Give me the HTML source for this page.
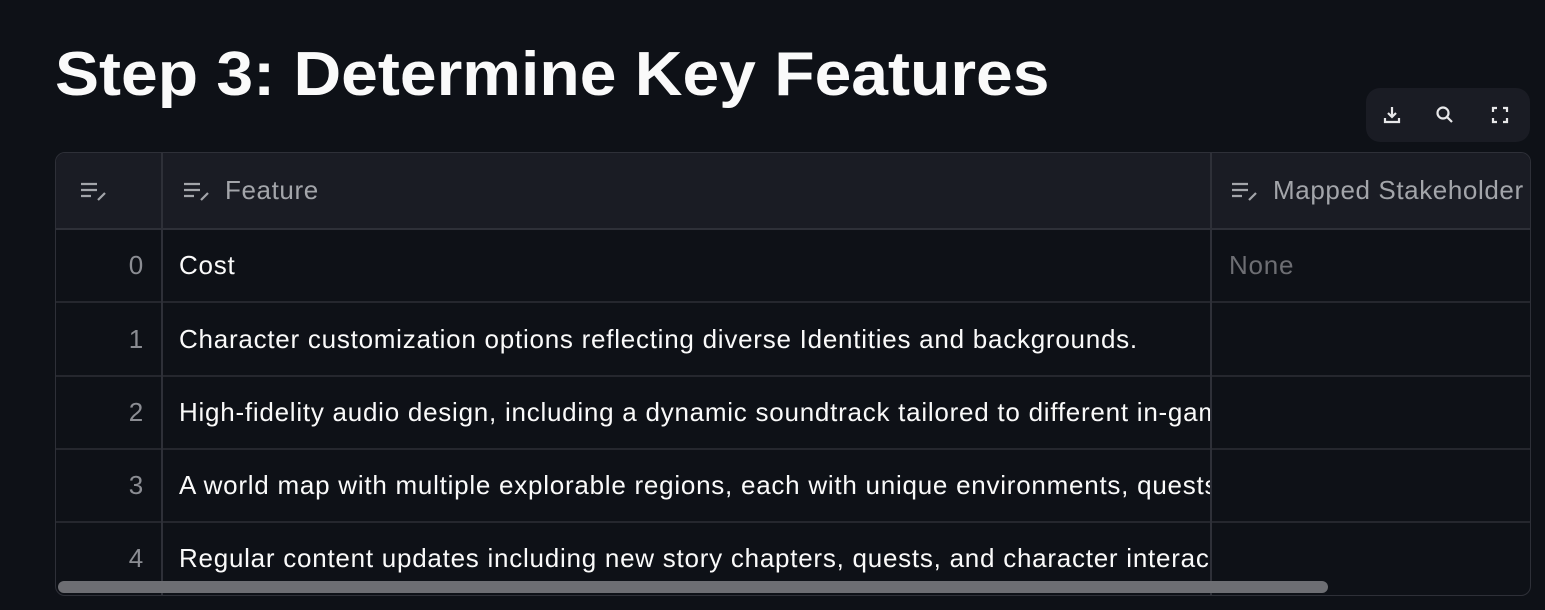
<!DOCTYPE html>
<html><head><style>
body{margin:0;width:1545px;height:610px;background:#0e1117;overflow:hidden;font-family:"Liberation Sans",sans-serif;color:#fafafa;position:relative}
h1{position:absolute;left:55px;top:30px;margin:0;font-size:62px;font-weight:bold;line-height:90px;white-space:nowrap;transform:scaleX(1.065);transform-origin:0 0}
.tb{position:absolute;left:1366px;top:88px;width:164px;height:54px;background:#1a1c24;border-radius:14px}
.tb svg{position:absolute;top:15px}
.tbl{position:absolute;left:55px;top:152px;width:1474px;height:442px;border:1px solid #2e3038;border-radius:10px;overflow:hidden}
.hdr{position:absolute;left:0;top:0;width:100%;height:75px;background:#1a1c24;border-bottom:2px solid #2e3038}
.vl{position:absolute;top:0;height:100%;width:2px;background:#2e3038}
.row{position:absolute;left:0;width:100%;height:72px;border-bottom:2px solid #25272e;font-size:26px;letter-spacing:0.75px}
.idx{position:absolute;left:0;width:88px;text-align:right;color:#8b8d93;line-height:72px}
.txt{position:absolute;left:123px;width:1031px;overflow:hidden;white-space:nowrap;line-height:72px}
.hd{position:absolute;top:0;line-height:75px;font-size:26px;letter-spacing:0.6px;color:#a3a5aa;white-space:nowrap}
.hd span{margin-left:12px}
.sb{position:absolute;left:2px;top:428px;width:1270px;height:12px;background:#6d6e73;border-radius:6px}
</style></head><body>
<h1>Step 3: Determine Key Features</h1>
<div class="tb">
<svg style="left:14px" width="24" height="24" viewBox="0 0 24 24" fill="none" stroke="#e8e8ea" stroke-width="2.2"><path d="M12 4v10M8 10l4 4 4-4M5 15v4h14v-4"/></svg>
<svg style="left:67px" width="24" height="24" viewBox="0 0 24 24" fill="none" stroke="#e8e8ea" stroke-width="2.2"><circle cx="10" cy="10" r="5.5"/><path d="M14 14l5 5"/></svg>
<svg style="left:122px" width="24" height="24" viewBox="0 0 24 24" fill="none" stroke="#e8e8ea" stroke-width="2.2"><path d="M5 9V5h4M15 5h4v4M19 15v4h-4M9 19H5v-4"/></svg>
</div>
<div class="tbl">
<div class="hdr"></div>
<div class="hd" style="left:24px"><svg width="30" height="22" viewBox="0 0 30 22" fill="none" stroke="#a3a5aa" stroke-width="2.2" style="vertical-align:-3px"><path d="M1 4h16M1 10h16M1 16h10M18 20l7-7"/></svg></div>
<div class="hd" style="left:127px"><svg width="30" height="22" viewBox="0 0 30 22" fill="none" stroke="#a3a5aa" stroke-width="2.2" style="vertical-align:-3px"><path d="M1 4h16M1 10h16M1 16h10M18 20l7-7"/></svg><span>Feature</span></div>
<div class="hd" style="left:1175px"><svg width="30" height="22" viewBox="0 0 30 22" fill="none" stroke="#a3a5aa" stroke-width="2.2" style="vertical-align:-3px"><path d="M1 4h16M1 10h16M1 16h10M18 20l7-7"/></svg><span>Mapped Stakeholder</span></div>
<div class="row" style="top:76px"><div class="idx">0</div><div class="txt">Cost</div><div style="position:absolute;left:1173px;line-height:72px;color:#6d6e73">None</div></div>
<div class="row" style="top:150px"><div class="idx">1</div><div class="txt">Character customization options reflecting diverse Identities and backgrounds.</div></div>
<div class="row" style="top:223px"><div class="idx">2</div><div class="txt">High-fidelity audio design, including a dynamic soundtrack tailored to different in-game</div></div>
<div class="row" style="top:296px"><div class="idx">3</div><div class="txt">A world map with multiple explorable regions, each with unique environments, quests</div></div>
<div class="row" style="top:369px;border-bottom:none"><div class="idx">4</div><div class="txt">Regular content updates including new story chapters, quests, and character interactions</div></div>
<div class="vl" style="left:105px"></div>
<div class="vl" style="left:1154px"></div>
<div class="sb"></div>
</div>
</body></html>
